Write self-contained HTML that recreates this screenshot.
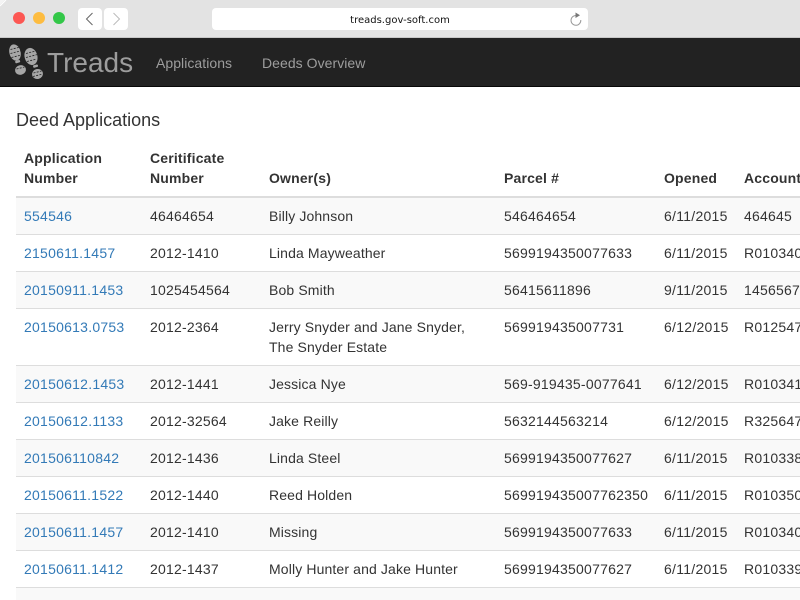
<!DOCTYPE html>
<html><head><meta charset="utf-8">
<style>
html,body{margin:0;padding:0;width:800px;height:600px;overflow:hidden;background:#fff}
body{font-family:"Liberation Sans",Arial,sans-serif;font-size:14px;color:#333;position:relative}
.bar{position:absolute;left:0;top:0;width:800px;height:37px;background:#e3e3e3;border-bottom:1px solid #c8c8c8}
.dot{position:absolute;top:12px;width:12px;height:12px;border-radius:50%}
.btn{position:absolute;top:8px;width:24px;height:22px;background:#fff;border-radius:4px}
.url{position:absolute;left:212px;top:8px;width:376px;height:22px;background:#fff;border-radius:4px;text-align:center;font:10px/23px "DejaVu Sans",sans-serif;color:#111}
.url span{position:relative;top:1px}
.nav{position:absolute;left:0;top:38px;width:800px;height:48px;background:#222;border-bottom:1px solid #080808}
.brand{position:absolute;left:47px;top:9px;font-size:28px;line-height:32px;color:#9d9d9d}
.lnk{position:absolute;top:15px;line-height:20px;color:#9d9d9d;letter-spacing:.05px}
h3{position:absolute;left:16px;top:110px;margin:0;font-size:18px;font-weight:400;line-height:20px;color:#333}
table{position:absolute;left:16px;top:140px;width:784px;border-collapse:collapse;table-layout:fixed;border-spacing:0}
th,td{padding:8px;line-height:20px;text-align:left;vertical-align:top;overflow:hidden;white-space:nowrap}
th:last-child,td:last-child{padding-right:0}
th{font-weight:700;vertical-align:bottom;border-bottom:2px solid #ddd;letter-spacing:.17px}
td{border-top:1px solid #ddd;letter-spacing:.22px}
td:nth-child(3){letter-spacing:.13px}
td:nth-child(5){letter-spacing:.27px}
td a{letter-spacing:.24px}
tr:first-child td{border-top:0}
tbody tr:nth-child(odd) td{background:#f9f9f9}
a{color:#337ab7;text-decoration:none}
</style></head><body>
<div class="bar">
<svg width="8" height="8" style="position:absolute;left:0;top:0"><path d="M0 6L6 0" stroke="#fff" stroke-width="1"/><path d="M0 0H5L0 5Z" fill="#f4f4f4"/></svg>
<div class="dot" style="left:13px;background:#fc5753"></div>
<div class="dot" style="left:33px;background:#fdbc40"></div>
<div class="dot" style="left:53px;background:#33c748"></div>
<div class="btn" style="left:78px"><svg width="24" height="22"><path d="M14.500 5L8.500 11 14.500 17" fill="none" stroke="#666" stroke-width="1"/></svg></div>
<div class="btn" style="left:104px"><svg width="24" height="22"><path d="M9.500 5L15.500 11 9.500 17" fill="none" stroke="#bbb" stroke-width="1"/></svg></div>
<div class="url"><span>treads.gov-soft.com</span><svg width="14" height="14" style="position:absolute;left:357px;top:4px"><path d="M6.500 3.500A4.900 4.900 0 1 0 11.800 8" fill="none" stroke="#999" stroke-width="1"/><path d="M6.500 0.500L11 3.300 6.500 6Z" fill="#777"/></svg></div>
</div>
<div class="nav">
<svg width="50" height="48" style="position:absolute;left:0;top:0" viewBox="0 38 50 48">
<g fill="#a6a6a6">
<ellipse cx="15" cy="52.500" rx="5.600" ry="8.300" transform="rotate(-15 15 52.500)"/>
<rect x="15" y="60.500" width="5" height="2.500" rx="1" transform="rotate(-15 17 61)"/>
<ellipse cx="20.500" cy="70" rx="5.500" ry="4.800" transform="rotate(-15 20.500 70)"/>
<ellipse cx="31" cy="56.500" rx="6.400" ry="8.700" transform="rotate(-15 31 56.500)"/>
<rect x="33" y="65" width="5" height="2.500" rx="1" transform="rotate(-15 35 66)"/>
<ellipse cx="37.500" cy="74" rx="5.500" ry="5" transform="rotate(-15 37.500 74)"/>
</g>
<g fill="none" stroke="#222" stroke-width=".8" stroke-dasharray="2 1.300">
<path d="M10.500 49.500l9-2.300M10.500 53.500l10-2.600M11.500 57.500l9-2.300"/>
<path d="M26 53.500l10-2.600M26 57.500l11-2.900M27 61.500l9-2.300"/>
<path d="M16.500 69l8-2M33.500 73l8-2M33 76.500l9-2.300"/>
</g>
</svg>
<div class="brand">Treads</div>
<div class="lnk" style="left:156px">Applications</div>
<div class="lnk" style="left:262px">Deeds Overview</div>
</div>
<h3>Deed Applications</h3>
<table>
<colgroup><col style="width:126px"><col style="width:119px"><col style="width:235px"><col style="width:160px"><col style="width:80px"><col style="width:64px"></colgroup>
<thead><tr><th>Application<br>Number</th><th>Ceritificate<br>Number</th><th>Owner(s)</th><th>Parcel #</th><th>Opened</th><th>Account Number</th></tr></thead>
<tbody>
<tr><td><a>554546</a></td><td>46464654</td><td>Billy Johnson</td><td>546464654</td><td>6/11/2015</td><td>464645</td></tr>
<tr><td><a>2150611.1457</a></td><td>2012-1410</td><td>Linda Mayweather</td><td>5699194350077633</td><td>6/11/2015</td><td>R0103409</td></tr>
<tr><td><a>20150911.1453</a></td><td>1025454564</td><td>Bob Smith</td><td>56415611896</td><td>9/11/2015</td><td>14565678</td></tr>
<tr><td><a>20150613.0753</a></td><td>2012-2364</td><td>Jerry Snyder and Jane Snyder,<br>The Snyder Estate</td><td>569919435007731</td><td>6/12/2015</td><td>R0125478</td></tr>
<tr><td><a>20150612.1453</a></td><td>2012-1441</td><td>Jessica Nye</td><td>569-919435-0077641</td><td>6/12/2015</td><td>R0103415</td></tr>
<tr><td><a>20150612.1133</a></td><td>2012-32564</td><td>Jake Reilly</td><td>5632144563214</td><td>6/12/2015</td><td>R3256478</td></tr>
<tr><td><a>201506110842</a></td><td>2012-1436</td><td>Linda Steel</td><td>5699194350077627</td><td>6/11/2015</td><td>R0103385</td></tr>
<tr><td><a>20150611.1522</a></td><td>2012-1440</td><td>Reed Holden</td><td>569919435007762350</td><td>6/11/2015</td><td>R0103501</td></tr>
<tr><td><a>20150611.1457</a></td><td>2012-1410</td><td>Missing</td><td>5699194350077633</td><td>6/11/2015</td><td>R0103409</td></tr>
<tr><td><a>20150611.1412</a></td><td>2012-1437</td><td>Molly Hunter and Jake Hunter</td><td>5699194350077627</td><td>6/11/2015</td><td>R0103395</td></tr>
<tr><td>&nbsp;</td><td></td><td></td><td></td><td></td><td></td></tr>
</tbody></table>
</body></html>
